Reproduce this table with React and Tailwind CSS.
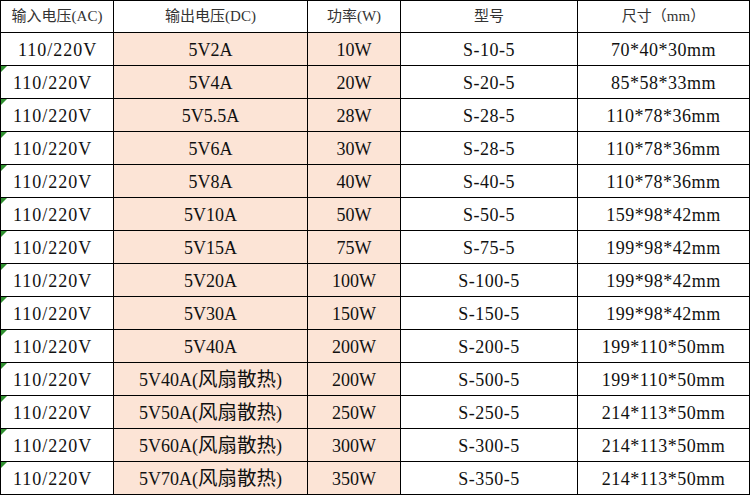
const headers = ["输入电压(AC)", "输出电压(DC)", "功率(W)", "型号", "尺寸（mm）"];

const rows = [
  ["5V2A", "10W", "S-10-5", "70*40*30mm"],
  ["5V4A", "20W", "S-20-5", "85*58*33mm"],
  ["5V5.5A", "28W", "S-28-5", "110*78*36mm"],
  ["5V6A", "30W", "S-28-5", "110*78*36mm"],
  ["5V8A", "40W", "S-40-5", "110*78*36mm"],
  ["5V10A", "50W", "S-50-5", "159*98*42mm"],
  ["5V15A", "75W", "S-75-5", "199*98*42mm"],
  ["5V20A", "100W", "S-100-5", "199*98*42mm"],
  ["5V30A", "150W", "S-150-5", "199*98*42mm"],
  ["5V40A", "200W", "S-200-5", "199*110*50mm"],
  ["5V40A", "200W", "S-500-5", "199*110*50mm", true],
  ["5V50A", "250W", "S-250-5", "214*113*50mm", true],
  ["5V60A", "300W", "S-300-5", "214*113*50mm", true],
  ["5V70A", "350W", "S-350-5", "214*113*50mm", true],
];

const font = "font-['Liberation_Serif','Noto_Sans_CJK_SC',serif]";
const cols = "grid grid-cols-[113px_194px_93px_177px_172px]";

export default function App() {
  return (
    <div className={`w-[750px] h-[496px] bg-white ${font} text-[#111]`}>
      <div className="border-t border-l border-black w-[750px]">
        <div className={`${cols} h-[32px]`}>
          {headers.map((h) => (
            <div
              key={h}
              className="border-r border-b border-black flex items-center justify-center text-[15px] text-[#333]"
            >
              {h}
            </div>
          ))}
        </div>

        {rows.map((r, i) => (
          <div key={i} className={`${cols} h-[33px] text-[18px]`}>
            <div
              className={`relative border-r border-b border-black flex items-center pt-[2px] tracking-[1px] ${
                i === 0 ? "pl-[17px]" : "pl-[12px]"
              }`}
            >
              {i > 0 && (
                <span className="absolute left-0 top-0 w-0 h-0 border-t-[6px] border-r-[6px] border-t-[#2f8f2f] border-r-transparent" />
              )}
              110/220V
            </div>
            <div className="border-r border-b border-black bg-[#fce4d6] flex items-center justify-center pt-[2px]">
              {r[0]}
              {r[4] && (
                <>
                  (<span className="text-[19.5px]">风扇散热</span>)
                </>
              )}
            </div>
            <div className="border-r border-b border-black bg-[#fce4d6] flex items-center justify-center pt-[2px]">
              {r[1]}
            </div>
            <div className="border-r border-b border-black flex items-center justify-center pt-[2px] tracking-[0.5px]">
              {r[2]}
            </div>
            <div className="border-r border-b border-black flex items-center justify-center pt-[2px] tracking-[0.5px]">
              {r[3]}
            </div>
          </div>
        ))}
      </div>
    </div>
  );
}
